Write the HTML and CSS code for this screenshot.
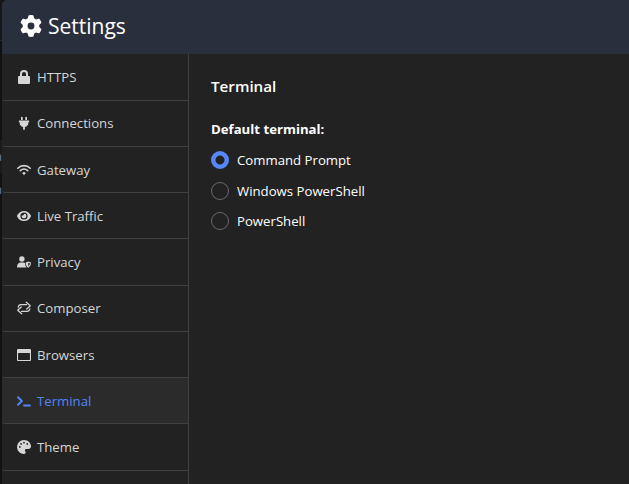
FILE: index.html
```
<!DOCTYPE html>
<html lang="en">
<head>
<meta charset="utf-8">
<title>Settings</title>
<link rel="stylesheet" href="styles.css">
</head>
<body>
<div class="backdrop"><span class="peek peek-one">a</span><span class="peek peek-two">n</span></div>
<div class="dialog">
  <header class="header">
    <svg class="gear" viewBox="0 0 512 512"><path d="M495.9 166.600c3.200 8.700.5 18.400-6.400 24.600l-43.300 39.400c1.100 8.300 1.700 16.800 1.700 25.400s-.6 17.100-1.700 25.400l43.300 39.400c6.900 6.200 9.600 15.900 6.400 24.600-4.400 11.900-9.700 23.300-15.800 34.300l-4.700 8.100c-6.600 11-14 21.400-22.100 31.200-5.900 7.200-15.700 9.600-24.500 6.800l-55.700-17.700c-13.400 10.300-28.200 18.900-44 25.400l-12.500 57.100c-2 9.100-9 16.300-18.200 17.800-13.800 2.300-28 3.500-42.500 3.500s-28.700-1.200-42.500-3.500c-9.200-1.500-16.200-8.700-18.200-17.800l-12.500-57.100c-15.800-6.500-30.600-15.100-44-25.400L83.100 425.900c-8.800 2.800-18.600.3-24.500-6.800-8.100-9.800-15.500-20.200-22.100-31.200l-4.700-8.100c-6.100-11-11.400-22.400-15.800-34.300-3.200-8.700-.5-18.400 6.400-24.600l43.300-39.400C64.600 273.100 64 264.600 64 256s.6-17.100 1.700-25.400L22.400 191.200c-6.900-6.200-9.600-15.900-6.400-24.600 4.400-11.900 9.700-23.300 15.800-34.300l4.700-8.100c6.600-11 14-21.400 22.100-31.200 5.900-7.200 15.700-9.600 24.500-6.800l55.700 17.700c13.400-10.300 28.200-18.900 44-25.400l12.500-57.100c2-9.100 9-16.300 18.200-17.800C227.300 1.200 241.500 0 256 0s28.700 1.200 42.500 3.500c9.200 1.500 16.200 8.700 18.200 17.800l12.500 57.100c15.800 6.500 30.600 15.100 44 25.400l55.700-17.700c8.800-2.800 18.600-.3 24.500 6.800 8.100 9.800 15.500 20.200 22.100 31.200l4.700 8.100c6.100 11 11.400 22.400 15.800 34.300zM256 336a80 80 0 1 0 0-160 80 80 0 1 0 0 160z"/></svg>
    <h1>Settings</h1>
  </header>
  <div class="body">
    <nav class="nav">
      <a class="item"><svg viewBox="0 0 14 14"><path fill-rule="evenodd" d="M3 6V4a4 4 0 0 1 8 0v2h.7c.8 0 1.300.500 1.300 1.300v5.400c0 .8-.5 1.300-1.300 1.300H2.300C1.500 14 1 13.500 1 12.700V7.300C1 6.500 1.500 6 2.300 6zm2 0h4V4a2 2 0 0 0-4 0z"/></svg>HTTPS</a>
      <a class="item"><svg viewBox="0 0 14 14"><path d="M4 1.300c0-.9 1.700-.9 1.700 0V4H4zM8.300 1.300c0-.9 1.700-.9 1.700 0V4H8.300zM1.900 4.500h10.200v1.500h-.7V7c0 2-1.500 3.600-3.500 4v2.700H6.100V11C4.100 10.600 2.600 9 2.600 7V6h-.7z"/></svg>Connections</a>
      <a class="item"><svg viewBox="0 0 14 14"><g fill="none" stroke="currentColor" stroke-width="1.600" stroke-linecap="round"><path d="M.8 5.200c3.500-3.400 8.900-3.400 12.400 0M3.300 7.700c2.200-2 5.200-2 7.400 0"/></g><circle cx="7" cy="10.300" r="1.400"/></svg>Gateway</a>
      <a class="item"><svg viewBox="0 0 14 14"><path fill-rule="evenodd" d="M7 2c3 0 5.500 1.700 6.900 4.600.1.300.1.500 0 .8C12.500 10.300 10 12 7 12S1.500 10.300.1 7.400a.9.9 0 0 1 0-.8C1.500 3.700 4 2 7 2zm0 1.400a3.600 3.600 0 1 0 0 7.200 3.600 3.600 0 0 0 0-7.200z"/><path d="M7 4.700a2.300 2.300 0 1 1-2.200 1.700c1.300.4 2.200-.4 2.200-1.700z"/></svg>Live Traffic</a>
      <a class="item"><svg viewBox="0 0 14 14"><circle cx="4.900" cy="4" r="2.700"/><path d="M3.800 7.500h2.500c.7 0 1.300.2 1.800.5 0 1.800.4 3.300 1.600 4.500H.6c-.4 0-.6-.2-.6-.6 0-2.500 1.500-4.400 3.800-4.400z"/><path fill-rule="evenodd" d="M11.300 6.500 14 7.600c0 2.300-.7 4.200-2.700 5.100-2-.9-2.600-2.800-2.600-5.100zm0 1.200v3.700c1.100-.7 1.500-1.700 1.600-3.100z"/></svg>Privacy</a>
      <a class="item"><svg viewBox="0 0 14 14"><path fill="none" stroke="currentColor" stroke-width="1.200" stroke-linecap="round" stroke-linejoin="round" d="M1.200 6.100C1.500 4.500 2.500 3.700 4 3.700h5.600M9.300 1.200l4 3.600-3.600 3.200M12.800 7.900c-.3 1.600-1.300 2.400-2.800 2.400H4.400M4.700 12.800l-4-3.600L4.300 6"/></svg>Composer</a>
      <a class="item"><svg viewBox="0 0 14 14"><path fill-rule="evenodd" d="M1.200 1h11.600c.8 0 1.200.4 1.200 1.200v9.600c0 .8-.4 1.200-1.200 1.200H1.200C.4 13 0 12.600 0 11.800V2.200C0 1.400.4 1 1.200 1zM1.100 5v6.900h11.800V5z"/></svg>Browsers</a>
      <a class="item active"><svg viewBox="0 0 14 14"><path fill="none" stroke="currentColor" stroke-width="1.900" stroke-linecap="round" stroke-linejoin="round" d="m1 3.200 3.900 3.800L1 10.800M7 11.500h6"/></svg>Terminal</a>
      <a class="item"><svg viewBox="0 0 14 14"><path fill-rule="evenodd" d="M7 0c3.900 0 7 2.900 7 6.500C14 8 12.800 9 11.300 9H9.400c-.9 0-1.500.6-1.500 1.400 0 .9.800 1.300.8 2.200S8 14 7 14a7 7 0 0 1 0-14zM2.800 6a.9.9 0 1 0 0 1.800.9.900 0 0 0 0-1.800zM4 3a.9.9 0 1 0 0 1.800A.9.9 0 0 0 4 3zM7 1.700a.9.900 0 1 0 0 1.800.9.900 0 0 0 0-1.800zM10.300 3a.9.9 0 1 0 0 1.800.9.9 0 0 0 0-1.800z"/></svg>Theme</a>
    </nav>
    <main class="content">
      <h2>Terminal</h2>
      <h3>Default terminal:</h3>
      <div class="option"><span class="radio checked"></span>Command Prompt</div>
      <div class="option"><span class="radio"></span>Windows PowerShell</div>
      <div class="option"><span class="radio"></span>PowerShell</div>
    </main>
  </div>
</div>
</body>
</html>
```
FILE: styles.css
```
* { box-sizing: border-box; }
body {
  margin: 0;
  height: 484px;
  overflow: hidden;
  display: flex;
  background: #141414;
  font: 13.200px/18px "Open Sans", sans-serif;
}
.backdrop {
  position: relative;
  width: 2px;
  flex: none;
  overflow: hidden;
  background: linear-gradient(#171717 40px, #2a2a2a 40px 41px, #111 41px 140px, #1b1b1b 140px 173px, #111 173px);
}
.peek { position: absolute; right: 0; color: #6579b0; }
.peek-one { top: 147px; }
.peek-two { top: 180px; }
.dialog {
  flex: 1;
  display: flex;
  flex-direction: column;
  overflow: hidden;
  border-top-left-radius: 5px;
  background: #222;
}
.header {
  flex: none;
  height: 54.4px;
  display: flex;
  align-items: center;
  gap: 6px;
  padding: 0 0 2px 18px;
  background: #2a2f3e;
  color: #fff;
}
.gear { width: 22px; height: 22px; fill: currentColor; }
h1 { margin: 0; font-size: 21px; line-height: 30px; font-weight: 400; }
.body { flex: 1; display: flex; min-height: 0; }
.nav {
  width: 187px;
  flex: none;
  border-right: 1px solid #404040;
}
.item {
  height: 46.250px;
  display: flex;
  align-items: center;
  gap: 6px;
  padding-left: 15px;
  border-bottom: 1px solid #404040;
  border-bottom-left-radius: 3px;
  color: #d6d6d6;
}
.item svg { width: 14px; height: 14px; fill: currentColor; }
.item.active { background: #2b2b2b; color: #5286f5; }
.content { padding: 22px 22px 0; color: #fff; }
h2 { margin: 0 0 24px; font-size: 15.200px; line-height: 20px; font-weight: 600; }
h3 { margin: 0 0 13px; font-size: 13.200px; line-height: 18px; font-weight: 700; }
.option { display: flex; align-items: center; gap: 8px; height: 18px; margin-bottom: 12.400px; }
.radio { width: 18px; height: 18px; border: 1px solid #696969; border-radius: 50%; }
.radio.checked { border: 0; background: radial-gradient(circle, #222 4px, #5688fa 5px); }
```
